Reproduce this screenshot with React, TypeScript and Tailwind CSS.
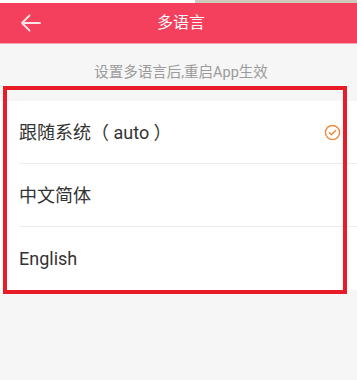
import React from 'react';

const langs = ['跟随系统（ auto ）', '中文简体', 'English'];

const CheckCircle = () => (
  <svg width="17" height="17" viewBox="0 0 24 24" fill="none" stroke="#ef8a3c" strokeWidth="2" strokeLinecap="round" strokeLinejoin="round">
    <circle cx="12" cy="12" r="10" />
    <path d="M7.5 12.2l3 3 6-6" />
  </svg>
);

export default function App() {
  return (
    <div className="relative w-[357px] h-[380px] bg-[#f6f6f6] overflow-hidden" style={{ fontFamily: 'Roboto, "Noto Sans CJK SC", sans-serif' }}>
      <div className="flex h-[3px]">
        <div className="w-[195px] bg-white" />
        <div className="flex-1 bg-[#cfcabb]" />
      </div>
      <div className="relative flex items-center justify-center h-[41px] bg-[#f5405d] border-b border-[#f7a3b1]">
        <svg className="absolute left-[20px] top-[10px]" width="22" height="20" viewBox="0 0 22 20" fill="none" stroke="#fce4e8" strokeWidth="1.8" strokeLinecap="round" strokeLinejoin="round">
          <path d="M2 10h18M9.5 2.5L2 10l7.5 7.5" />
        </svg>
        <span className="text-[16px] text-white pl-[5px]">多语言</span>
      </div>
      <div className="h-[57px] flex items-center justify-center text-[14.5px] text-[#9b9b9b] pl-[5px]">
        设置多语言后,重启App生效
      </div>
      <div className="bg-white">
        {langs.map((l, i) => (
          <div key={l} className="pl-[19px]">
            <div className={`h-[63px] flex items-center justify-between pr-[16px] ${i < langs.length - 1 ? 'border-b border-[#ececec]' : ''}`}>
              <span className="text-[18px] text-[#333333] whitespace-pre">{l}</span>
              {i === 0 && <CheckCircle />}
            </div>
          </div>
        ))}
      </div>
      <div className="absolute left-[3px] top-[86px] w-[344px] h-[208px] border-[4px] border-[#e81c27]" />
    </div>
  );
}
